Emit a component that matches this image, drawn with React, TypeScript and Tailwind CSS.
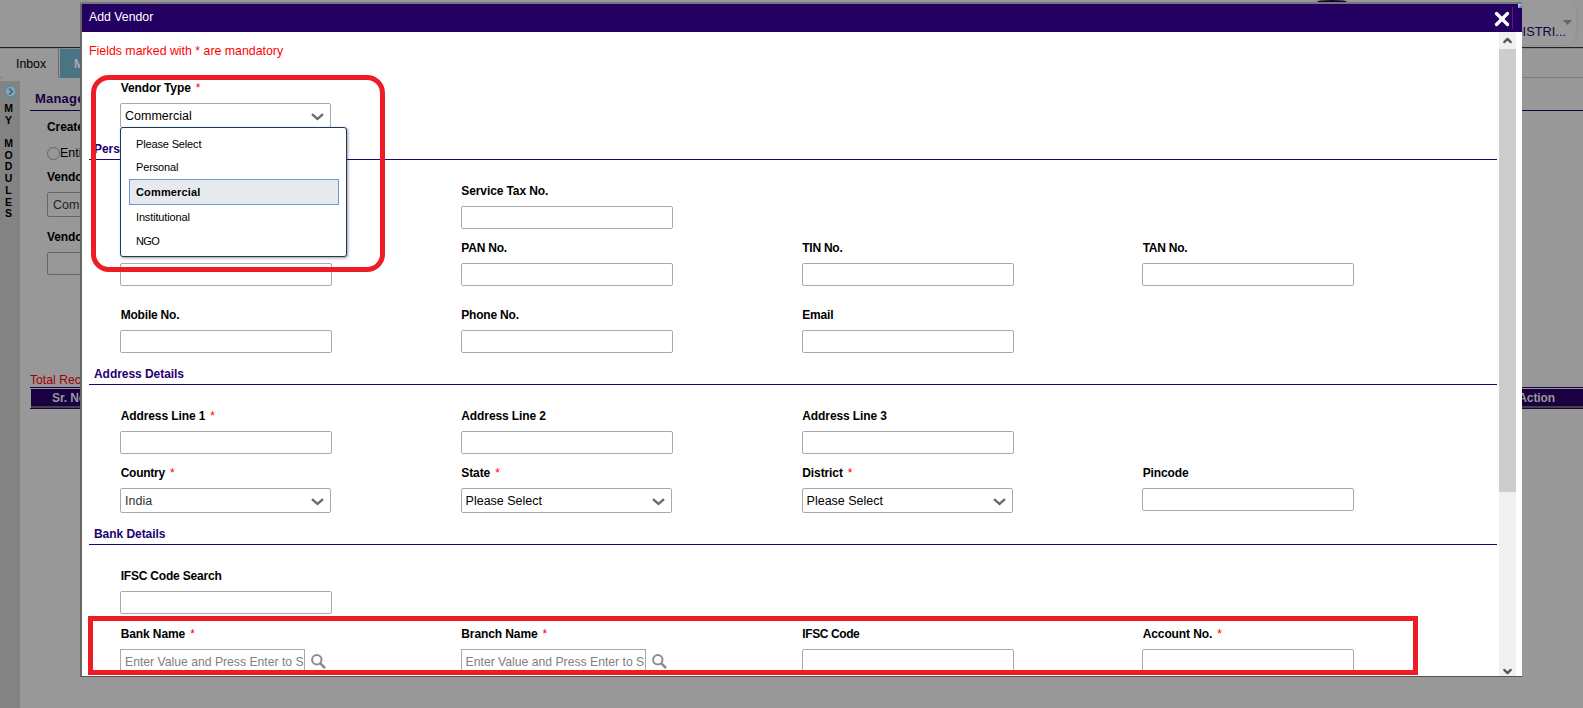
import React from 'react';
import { ChevronDown, ChevronUp, X } from 'lucide-react';

function Label({ text, required, tracking = 'tracking-[-0.1px]' }: { text: string; required?: boolean; tracking?: string }) {
  return (
    <div className="flex h-4 items-center gap-[5px] whitespace-pre pl-[0.7px] text-[12px] font-bold leading-4 text-black">
      <span className={tracking}>{text}</span>
      {required && <span className="font-normal text-[#f00]">*</span>}
    </div>
  );
}

function TextBox() {
  return <div className="h-[23px] w-[212px] shrink-0 rounded-[2px] border border-[#a9a9a9] bg-white" />;
}

function SelectBox({ value, color = 'text-black' }: { value: string; color?: string }) {
  return (
    <div className="flex h-[25px] w-[211px] shrink-0 items-center justify-between rounded-[2px] border border-[#a9a9a9] bg-white pl-1 pr-[6px]">
      <span className={`pt-px text-[12.5px] leading-4 ${color}`}>{value}</span>
      <svg className="mt-[3px] h-2 w-[13px]" viewBox="0 0 13 8" fill="none" stroke="#6c6c6c" strokeWidth="2.4">
        <path d="M1 1.200 6.500 6 12 1.200" />
      </svg>
    </div>
  );
}

function LookupBox() {
  return (
    <div className="flex">
      <div className="h-[23px] w-[185px] whitespace-nowrap border border-[#a9a9a9] bg-white pl-1 pt-1 text-[12.200px] leading-4 text-[#808080]">
        <div className="w-[179px]">Enter Value and Press Enter to S</div>
      </div>
      <svg className="ml-[6px] mt-[5px] size-[15px]" viewBox="0 0 15 15" fill="none" stroke="#8c8c8c">
        <circle cx="5.800" cy="5.800" r="4.700" strokeWidth="2" />
        <path d="m9.300 9.300 4.700 4.700" strokeWidth="2.600" />
      </svg>
    </div>
  );
}

function Field({ label, required, tracking, children }: { label: string; required?: boolean; tracking?: string; children: React.ReactNode }) {
  return (
    <div className="flex h-[46px] flex-col gap-[7px]">
      <Label text={label} required={required} tracking={tracking} />
      {children}
    </div>
  );
}

function Row({ className, children }: { className: string; children: React.ReactNode }) {
  return <div className={`grid h-[46px] grid-cols-[340.6px_341px_340.4px_212px] pl-[31px] ${className}`}>{children}</div>;
}

function SectionTitle({ title, className }: { title: string; className: string }) {
  return (
    <div className={`h-[19px] border-b border-[#240070] pl-[5px] text-[12px] font-bold leading-4 tracking-[-0.05px] text-[#240070] ${className}`}>
      {title}
    </div>
  );
}

function BackgroundPage() {
  return (
    <div className="flex h-[708px] flex-col bg-[#989898]">
      <div className="flex h-[47px] shrink-0 justify-end pr-[6px]">
        <div className="flex h-[46px] w-[120px] justify-end rounded-r-[12px] border-b border-r border-[#929292] bg-[#9a9a9a] pr-1">
          <span className="pt-[24px] text-[12.800px] leading-4 text-[#180042]">DISTRI...</span>
          <svg className="-ml-[3px] mt-5 h-[5px] w-[9px]" viewBox="0 0 9 5" fill="#666">
            <path d="M0 0h9L4.500 5z" />
          </svg>
        </div>
      </div>
      <div className="h-[2px] shrink-0 border-b border-[#858585] bg-[#222]" />
      <div className="flex h-[29px] shrink-0 border-b border-[#7c7c7c]">
        <div className="ml-[2px] h-[29px] w-[57px] border-r border-[#6c6c6c] bg-[#989898] pl-[14px] pt-[7px] text-[12.300px] leading-4 text-black">Inbox</div>
        <div className="ml-px h-[29px] w-[90px] bg-[#4a7384] pl-[14px] pt-[7px] text-[12px] font-bold leading-4 text-[#aaa]">Manage</div>
      </div>
      <div className="flex min-h-0 flex-1 pt-[3px]">
        <div className="flex w-5 flex-col items-center bg-[#838383] pt-1">
          <svg className="size-[13px]" viewBox="0 0 12 12" fill="none" stroke="#4f8ba3" strokeWidth="1.200">
            <circle cx="6" cy="6" r="5.300" fill="#8f9ea4" />
            <path d="m4.800 3.300 2.700 2.700-2.700 2.700" stroke="#1f6480" />
          </svg>
          <div className="mt-[5px] flex w-full flex-col items-center pr-[3px] text-[10.500px] font-bold leading-[11.700px] text-black">
            {'MY MODULES'.split('').map((c, i) => (
              <span key={i} className="block h-[11.700px]">{c}</span>
            ))}
          </div>
        </div>
        <div className="flex flex-1 flex-col pl-[10px]">
          <div className="h-[30px] border-b border-[#180042] pl-[5px] pt-[10px] text-[13px] font-bold leading-4 tracking-[0.200px] text-[#180042]">Manage Vendor</div>
          <div className="flex flex-col pl-[17px] text-[12px] leading-4 text-black">
            <b className="mt-2 tracking-[-0.1px]">Create Vendor</b>
            <div className="mt-[10px] flex h-4 items-center text-[12.500px]">
              <span className="size-[13px] rounded-full border border-[#666]" />Entity
            </div>
            <b className="mt-[8px] tracking-[-0.1px]">Vendor Type</b>
            <div className="mt-[7px] h-[25px] w-[212px] rounded-[2px] border border-[#666] pl-[5px] pt-1 text-[12.500px] text-[#222]">Commercial</div>
            <b className="mt-3 tracking-[-0.1px]">Vendor Name</b>
            <div className="mt-[7px] h-[23px] w-[212px] rounded-[2px] border border-[#666]" />
          </div>
          <div className="mt-[97px] h-[15px] text-[12.200px] leading-4 text-[#a00000]">Total Records</div>
          <div className="flex h-[22px] flex-col border-y border-[#180042] pl-px pt-px">
            <div className="flex h-[17px] items-center justify-between bg-[#180042] pl-[21px] pr-7 text-[12px] font-bold tracking-[-0.1px] text-[#999]">
              <span>Sr. No.</span>
              <span>Action</span>
            </div>
            <div className="h-[2px] bg-[#444]" />
          </div>
        </div>
      </div>
    </div>
  );
}

const OPTIONS = [
  { name: 'Please Select', style: 'h-[23px] tracking-[-0.150px]' },
  { name: 'Personal', style: 'h-[23px] tracking-[-0.150px]' },
  { name: 'Commercial', style: 'h-[26px] border border-[#6f98d0] bg-[#e6eaef] text-[11.500px] font-bold tracking-[0.150px] !pl-[6px]' },
  { name: 'Institutional', style: 'h-6 tracking-[-0.150px]' },
  { name: 'NGO', style: 'h-6 tracking-[-0.600px]' },
];

export default function App() {
  return (
    <div className="relative h-[708px] w-[1583px] overflow-hidden font-['Liberation_Sans',Arial,sans-serif]">
      <BackgroundPage />
      <div className="absolute left-[1317px] top-0 h-[4px] w-[30px] rounded-t-[50%] bg-[#10002c]" />

      <div className="absolute left-[80px] top-[2px] flex h-[675px] w-[1442px] flex-col overflow-hidden rounded-t-[2px] border-b border-l-2 border-t-2 border-b-[#555] border-l-[#666] border-t-[#777] bg-white">
        <div className="flex h-7 shrink-0 justify-between bg-[#240062] pl-[7px]">
          <span className="pt-[5px] text-[12.300px] leading-4 text-white">Add Vendor</span>
          <div className="flex">
            <X className="-mr-px mt-[4px] size-[22px]" color="#fff" strokeWidth={3.600} />
            <div className="mr-[9px] mt-[3px] h-[22px] w-px bg-[#6b1a6b]" />
            <div className="-ml-[4px] size-[4px] bg-gradient-to-br from-[#cfe6ff] to-[#1f6fb0]" />
          </div>
        </div>
        <div className="flex min-h-0 flex-1">
          <div className="w-[1417px] overflow-hidden pl-[7px] pr-[2px]">
            <div className="mt-[11px] h-4 text-[12.350px] leading-4 text-[#f00]">Fields marked with * are mandatory</div>
            <Row className="mt-[21px]">
              <Field label="Vendor Type" required><SelectBox value="Commercial" /></Field>
            </Row>
            <SectionTitle title="Personal Details" className="mt-[15px]" />
            <Row className="mt-[23px]">
              <Field label=""><TextBox /></Field>
              <Field label="Service Tax No."><TextBox /></Field>
            </Row>
            <Row className="mt-[11px]">
              <Field label=""><TextBox /></Field>
              <Field label="PAN No." tracking="tracking-[-0.200px]"><TextBox /></Field>
              <Field label="TIN No." tracking="tracking-[-0.250px]"><TextBox /></Field>
              <Field label="TAN No." tracking="tracking-[-0.250px]"><TextBox /></Field>
            </Row>
            <Row className="mt-[21px]">
              <Field label="Mobile No." tracking="tracking-[-0.200px]"><TextBox /></Field>
              <Field label="Phone No." tracking="tracking-[-0.200px]"><TextBox /></Field>
              <Field label="Email" tracking="tracking-[-0.200px]"><TextBox /></Field>
            </Row>
            <SectionTitle title="Address Details" className="mt-[13px]" />
            <Row className="mt-[23px]">
              <Field label="Address Line 1" required><TextBox /></Field>
              <Field label="Address Line 2"><TextBox /></Field>
              <Field label="Address Line 3"><TextBox /></Field>
            </Row>
            <Row className="mt-[11px]">
              <Field label="Country" required tracking="tracking-[-0.250px]"><SelectBox value="India" color="text-[#333]" /></Field>
              <Field label="State" required><SelectBox value="Please Select" /></Field>
              <Field label="District" required><SelectBox value="Please Select" /></Field>
              <Field label="Pincode"><TextBox /></Field>
            </Row>
            <SectionTitle title="Bank Details" className="mt-[15px]" />
            <Row className="mt-[23px]">
              <Field label="IFSC Code Search" tracking="tracking-[-0.200px]"><TextBox /></Field>
            </Row>
            <Row className="mt-[12px]">
              <Field label="Bank Name" required><LookupBox /></Field>
              <Field label="Branch Name" required><LookupBox /></Field>
              <Field label="IFSC Code" tracking="tracking-[-0.400px]"><TextBox /></Field>
              <Field label="Account No." required><TextBox /></Field>
            </Row>
          </div>
          <div className="flex w-[17px] flex-col items-center justify-between bg-[#f0f0f0]">
            <div className="flex w-full flex-col items-center">
              <ChevronUp className="my-[2px] size-[13px]" color="#555" strokeWidth={4} />
              <div className="h-[443px] w-full bg-[#cdcdcd]" />
            </div>
            <ChevronDown className="-mb-[2px] size-[13px]" color="#555" strokeWidth={4} />
          </div>
        </div>
      </div>

      <div className="absolute left-[120px] top-[127px] h-[130px] w-[227px] rounded-[3px] border border-[#1d3a5c] bg-white px-2 pt-[5px] shadow-[1px_1px_3px_rgba(0,0,0,0.4)]">
        {OPTIONS.map((o) => (
          <div key={o.name} className={`flex w-[210px] items-center pl-[7px] text-[11px] leading-none text-black ${o.style}`}>
            {o.name}
          </div>
        ))}
      </div>

      <div className="absolute left-[91px] top-[75px] h-[197px] w-[294px] rounded-[18px] border-[5px] border-[#ee1c24]" />
      <div className="absolute left-[88px] top-[616px] h-[59px] w-[1330px] border-[5px] border-[#ee1c24]" />
    </div>
  );
}
